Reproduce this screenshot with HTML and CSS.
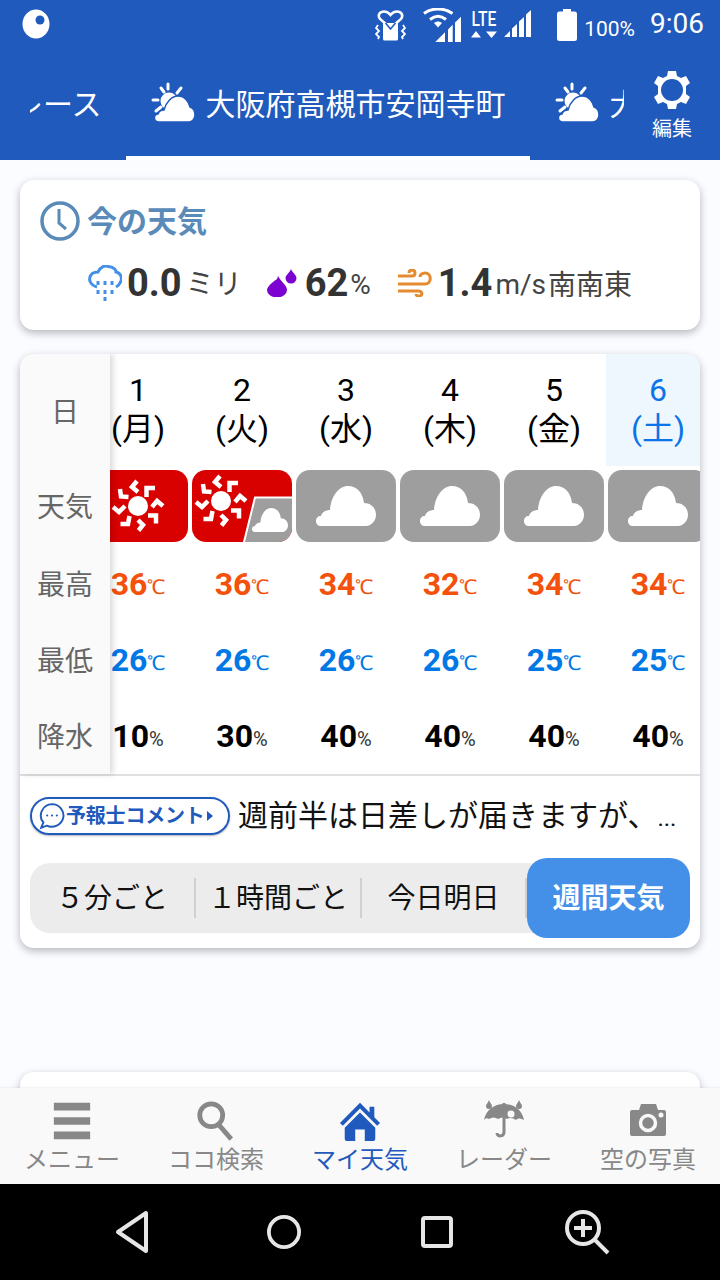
FILE: index.html
```html
<!DOCTYPE html>
<html lang="ja">
<head>
<meta charset="utf-8">
<title>天気</title>
<link rel="stylesheet" href="styles.css">
</head>
<body>
<svg class="defs" width="0" height="0">
  <symbol id="partly" viewBox="0 0 44 40">
    <g stroke="#fff" stroke-width="3" stroke-linecap="round"><path d="M17 2v5M10 6l3 4M30 6l-4 5M2 18h5M5 29l5-4"/></g>
    <circle cx="18" cy="19" r="8.500" fill="#fff"/>
    <path d="M8 40a4 4 0 0 1-1-8c1-3 4-4 6-4 2-8 8-14 14-14 7 0 11 6 12 11 3 1 5 4 5 8 0 4-3 7-6 7z" fill="#fff" stroke="#1f5abc" stroke-width="1.500"/>
  </symbol>
  <symbol id="cloud" viewBox="0 0 60 40">
    <path d="M5 40C2 40 0 38 0 35C0 32 2 30 5 30C6 26 10 24 14 24C15 10 23 0 32 0C41 0 47 7 48 17C55 17 60 22 60 29C60 35 55 40 50 40Z" fill="#fff"/>
  </symbol>
  <symbol id="sun" viewBox="-30 -30 60 60">
    <circle r="10" fill="#fff"/>
    <g fill="none" stroke="#fff" stroke-width="4.500">
      <path d="M-1-25l-5 6 6 5"/>
      <path d="M17-18H8.500v9"/>
      <path d="M14 1l5-6 6 5"/>
      <path d="M10 9.500h8v8"/>
      <path d="M0 14l5 5-4.500 5.500"/>
      <path d="M-8.500 10l-1.500 8h-7.500"/>
      <path d="M-25 1l6 5 6-6"/>
      <path d="M-18-17l1 7.500 7.500.5"/>
    </g>
  </symbol>
</svg>
<div class="phone">
  <div class="top">
    <div class="status">
      <svg class="st-dot" viewBox="0 0 28 30"><ellipse cx="14" cy="15" rx="13.500" ry="14.500" fill="#fff"/><circle cx="18" cy="11" r="4.500" fill="#1f5abc"/></svg>
      <div class="st-right">
        <svg class="st-ic st-vib" viewBox="0 0 31 31">
          <path d="M15.500 18 5 9C2 5 5 1.500 9 1.500c3 0 5 1.500 6.500 3.500C17 3 19 1.500 22 1.500c4 0 7 3.500 4 7.500z" fill="none" stroke="#fff" stroke-width="2.500"/>
          <path d="M8 13h15v16a1.500 1.500 0 0 1-1.500 1.500h-12A1.500 1.500 0 0 1 8 29z" fill="#fff"/>
          <path d="M10.500 13l5 6 5-6" fill="none" stroke="#1f5abc" stroke-width="1.500"/>
          <path d="M3 15L1 18l3 3-3 3 3 3-1 2M28 15l2 3-3 3 3 3-3 3 1 2" fill="none" stroke="#fff" stroke-width="1.800"/>
        </svg>
        <svg class="st-ic st-wifi" viewBox="0 0 39 34">
          <g fill="none" stroke="#fff" stroke-width="3"><path d="M1 5.500c8-6 20-6 28.500 0"/><path d="M7 11.500c5-4 11-4 16 0"/></g>
          <path d="M11 15c3-2 5-2 8 0l-4 4.500z" fill="#fff"/>
          <path d="M38 8.700V34h-6V14.500zM29.700 16.800V34H25V21.400zM22 24.300V34H12.300z" fill="#fff"/>
        </svg>
        <div class="st-lte"><span class="st-lte-t">LTE</span><svg class="st-arrows" viewBox="0 0 27 7"><path d="M5 0l5 6.500H0zM15 .5h11l-5.500 6.500z" fill="#fff"/></svg></div>
        <svg class="st-ic st-sig" viewBox="0 0 28 27"><path d="M28 0v27h-5V4.500zM21 7v20h-5V11.500zM14 14v13H9V18.500zM7 21v6H1z" fill="#fff"/></svg>
        <svg class="st-ic st-bat" viewBox="0 0 20 32"><path d="M6 0h8v2.500h3.500A2.500 2.500 0 0 1 20 5v24.500a2.500 2.500 0 0 1-2.500 2.500h-15A2.500 2.500 0 0 1 0 29.500V5a2.500 2.500 0 0 1 2.500-2.500H6z" fill="#fff"/></svg>
        <span class="st-pct">100%</span>
        <span class="st-time">9:06</span>
      </div>
    </div>
    <div class="tabbar">
      <div class="tabs">
        <div class="tab tab-first"><svg class="tab-ic"><use href="#partly"/></svg><span>レース</span></div>
        <div class="tab tab-active"><svg class="tab-ic"><use href="#partly"/></svg><span>大阪府高槻市安岡寺町</span></div>
        <div class="tab"><svg class="tab-ic"><use href="#partly"/></svg><span>大</span></div>
      </div>
      <div class="edit">
        <svg class="gear" viewBox="0 0 40 40"><path d="M16 1h8l1 5 4 2 5-2 4 7-4 3v8l4 3-4 7-5-2-4 2-1 5h-8l-1-5-4-2-5 2-4-7 4-3v-8l-4-3 4-7 5 2 4-2z" fill="#fff"/><circle cx="20" cy="20" r="11" fill="#1f5abc"/></svg>
        <span class="edit-label">編集</span>
      </div>
    </div>
  </div>

  <main class="content">
    <section class="card now">
      <h2 class="now-title">
        <svg class="clock" viewBox="0 0 40 40"><circle cx="20" cy="20" r="18" fill="none" stroke="#5a8ab8" stroke-width="3.500"/><path d="M19 8v14l7 6" fill="none" stroke="#5a8ab8" stroke-width="3"/></svg>
        <span class="now-title-t">今の天気</span>
      </h2>
      <div class="now-row">
        <svg class="now-ic" viewBox="0 0 34 36">
          <path d="M9 22C2 20 0 14 3 10C5 7 8 7 10 7C12 2 17 0 20 1.500C26 2 28 5 28 7C33 8 34 13 33 16C32 19 30 21 28 22" fill="none" stroke="#4490e8" stroke-width="3"/>
          <path d="M10 16v4M17 16v4M24 16v4M10 25v4M17 25v4M24 25v4M17 32v4" stroke="#4490e8" stroke-width="3"/>
        </svg>
        <b class="num">0.0</b><span class="unit unit-mm">ミリ</span>
        <svg class="now-ic ic-drop" viewBox="0 0 30 28"><path d="M11 7c-1 4-1 3-5 6-4 3-6 6-6 8a10 7.500 0 0 0 20 0c0-5-6-8-9-14z" fill="#7b02d0"/><path d="M24 0c1 3 5.500 6 5.500 9a5.500 5.500 0 0 1-11 0c0-3 4-5 5.500-9z" fill="#7b02d0"/></svg>
        <b class="num">62</b><span class="unit unit-pct">%</span>
        <svg class="now-ic ic-wind" viewBox="0 0 34 28">
          <g fill="none" stroke="#e58a2e" stroke-width="3">
            <path d="M0 7h14c4 0 4-6 0-6-2 0-3 1-3 3"/>
            <path d="M0 15h27c7 0 7-11 0-11-3 0-5 2-5 4"/>
            <path d="M0 22h20c5 0 5 5 1 5-2 0-3-1-3-2"/>
          </g>
        </svg>
        <b class="num">1.4</b><span class="unit unit-ms">m/s</span><span class="unit-dir">南南東</span>
      </div>
    </section>

    <section class="card week">
      <div class="table">
        <div class="labels">
          <div class="lab lab-date">日</div>
          <div class="lab lab-wx">天気</div>
          <div class="lab lab-row">最高</div>
          <div class="lab lab-row">最低</div>
          <div class="lab lab-row">降水</div>
        </div>
        <div class="days">
          <div class="day">
            <div class="date">1<br>(月)</div>
            <div class="wx wx-sun"><svg class="ic-sun"><use href="#sun"/></svg></div>
            <div class="val hi">36<small>℃</small></div><div class="val lo">26<small>℃</small></div><div class="val rain">10<small>%</small></div>
          </div>
          <div class="day">
            <div class="date">2<br>(火)</div>
            <div class="wx wx-sun wx-mix"><svg class="ic-sun"><use href="#sun"/></svg>
              <svg class="mix" viewBox="0 0 100 72"><path d="M51.500 74 63 27.500H102V74z" fill="#9e9e9e" stroke="#fff" stroke-width="2"/><use href="#cloud" x="60" y="36" width="36" height="28"/></svg></div>
            <div class="val hi">36<small>℃</small></div><div class="val lo">26<small>℃</small></div><div class="val rain">30<small>%</small></div>
          </div>
          <div class="day">
            <div class="date">3<br>(水)</div>
            <div class="wx"><svg class="ic-cloud"><use href="#cloud"/></svg></div>
            <div class="val hi">34<small>℃</small></div><div class="val lo">26<small>℃</small></div><div class="val rain">40<small>%</small></div>
          </div>
          <div class="day">
            <div class="date">4<br>(木)</div>
            <div class="wx"><svg class="ic-cloud"><use href="#cloud"/></svg></div>
            <div class="val hi">32<small>℃</small></div><div class="val lo">26<small>℃</small></div><div class="val rain">40<small>%</small></div>
          </div>
          <div class="day">
            <div class="date">5<br>(金)</div>
            <div class="wx"><svg class="ic-cloud"><use href="#cloud"/></svg></div>
            <div class="val hi">34<small>℃</small></div><div class="val lo">25<small>℃</small></div><div class="val rain">40<small>%</small></div>
          </div>
          <div class="day day-sat">
            <div class="date">6<br>(土)</div>
            <div class="wx"><svg class="ic-cloud"><use href="#cloud"/></svg></div>
            <div class="val hi">34<small>℃</small></div><div class="val lo">25<small>℃</small></div><div class="val rain">40<small>%</small></div>
          </div>
        </div>
      </div>
      <div class="comment">
        <div class="badge">
          <svg class="bubble" viewBox="0 0 26 26"><path d="M13 2a11 10.500 0 1 1-5 20l-5 2 2-5A11 10.500 0 0 1 13 2z" fill="none" stroke="#1f5abc" stroke-width="1.800"/><g fill="#1f5abc"><circle cx="8.500" cy="12.500" r="1"/><circle cx="13" cy="12.500" r="1"/><circle cx="17.500" cy="12.500" r="1"/></g></svg>
          <span class="badge-t">予報士コメント</span><span class="badge-arrow"></span>
        </div>
        <p class="comment-t">週前半は日差しが届きますが、<span class="dots">...</span></p>
      </div>
      <div class="seg">
        <div class="seg-i seg-a"><span class="seg-t">５分ごと</span></div>
        <div class="seg-i seg-b"><span class="seg-t">１時間ごと</span></div>
        <div class="seg-i seg-c"><span class="seg-t">今日明日</span></div>
        <div class="seg-on"><span class="seg-t">週間天気</span></div>
      </div>
    </section>

    <section class="card peek"></section>
  </main>

  <nav class="nav">
    <div class="nav-i">
      <svg class="nav-ic" viewBox="0 0 44 44"><path d="M3 3h38v8H3zM3 18h38v8H3zM3 33h38v8H3z" fill="#888"/></svg>
      <span>メニュー</span>
    </div>
    <div class="nav-i">
      <svg class="nav-ic" viewBox="0 0 44 44"><circle cx="17" cy="16" r="12" fill="none" stroke="#888" stroke-width="5"/><path d="M25 26l13 15" stroke="#888" stroke-width="5"/></svg>
      <span>ココ検索</span>
    </div>
    <div class="nav-i nav-on">
      <svg class="nav-ic" viewBox="0 0 44 44"><path d="M22 3 1 24l3 3L22 9l18 18 3-3-6-6V7h-5v6z" fill="#1f5abc"/><path d="M22 13 6 29v11a3 3 0 0 0 3 3h8V31h10v12h8a3 3 0 0 0 3-3V29z" fill="#1f5abc"/></svg>
      <span>マイ天気</span>
    </div>
    <div class="nav-i">
      <svg class="nav-ic" viewBox="0 0 42 42">
        <path d="M1 20C3 10 11 4 21 4s18 6 20 16c-3-2-6-2-8 0-3-2-6-3-9-1-3-2-6-2-9 0-3-2-6-2-9 0-2-1-3-1-5 1z" fill="#888"/>
        <path d="M21 3v29c0 5-7 5-7 1" fill="none" stroke="#888" stroke-width="3"/>
        <path d="M6 0c1 3 3 4 3 6a3 3 0 0 1-6 0c0-2 2-3 3-6zM36 0c1 3 3 4 3 6a3 3 0 0 1-6 0c0-2 2-3 3-6z" fill="#888"/>
        <circle cx="28" cy="14" r="3.500" fill="#f9f9f9"/>
      </svg>
      <span>レーダー</span>
    </div>
    <div class="nav-i">
      <svg class="nav-ic" viewBox="0 0 42 42"><path d="M5 10h7l2-6h15l2 6h6a2 2 0 0 1 2 2v22a2 2 0 0 1-2 2H5a2 2 0 0 1-2-2V12a2 2 0 0 1 2-2z" fill="#888"/><circle cx="21" cy="23" r="7.500" fill="none" stroke="#f9f9f9" stroke-width="3.500"/><circle cx="34" cy="15" r="2.500" fill="#f9f9f9"/></svg>
      <span>空の写真</span>
    </div>
  </nav>

  <div class="sysnav">
    <svg class="sys sys-back" viewBox="0 0 34 44"><path d="M31 3v38L3 22z" fill="none" stroke="#e6e6e6" stroke-width="4" stroke-linejoin="round"/></svg>
    <svg class="sys sys-home" viewBox="0 0 36 36"><circle cx="18" cy="18" r="16" fill="none" stroke="#e6e6e6" stroke-width="4"/></svg>
    <svg class="sys sys-rec" viewBox="0 0 36 36"><rect x="4" y="4" width="28" height="28" rx="2" fill="none" stroke="#e6e6e6" stroke-width="4"/></svg>
    <svg class="sys sys-zoom" viewBox="0 0 46 46"><circle cx="19" cy="19" r="16" fill="none" stroke="#e6e6e6" stroke-width="4"/><path d="M19 10v18M10 19h18M31 31l13 13" fill="none" stroke="#e6e6e6" stroke-width="4"/></svg>
  </div>
</div>
</body>
</html>
```
FILE: styles.css
```css
* { box-sizing: border-box; }
html, body { margin: 0; padding: 0; }
body { font-family: "Noto Sans CJK JP", "Noto Sans", Roboto, sans-serif; background: #fbfcff; }
.defs { position: absolute; }
.phone { width: 720px; height: 1280px; display: flex; flex-direction: column; overflow: hidden; }

.top { background: #1f5abc; color: #fff; flex: none; }
.status { height: 48px; display: flex; align-items: center; justify-content: space-between; padding: 0 16px 0 22px; }
.st-dot { width: 28px; height: 30px; }
.st-right { display: flex; align-items: center; }
.st-ic { display: block; }
.st-vib { width: 31px; height: 31px; margin-top: 2px; }
.st-wifi { width: 39px; height: 34px; margin-left: 17px; margin-top: 2px; }
.st-lte { display: flex; flex-direction: column; align-items: center; margin-left: 8px; width: 28px; margin-top: -1px; }
.st-lte-t { font: 500 20px/20px Roboto, sans-serif; transform: scaleX(.78); }
.st-arrows { width: 27px; height: 7px; display: block; margin-top: 2px; }
.st-sig { width: 28px; height: 27px; margin-left: 5px; margin-top: -2px; }
.st-bat { width: 20px; height: 32px; margin-left: 26px; margin-top: 2px; }
.st-pct { font: 400 21px/24px Roboto, sans-serif; margin-left: 7px; margin-top: 10px; }
.st-time { font: 400 28px/32px Roboto, sans-serif; margin-left: 15px; }

.tabbar { height: 112px; display: flex; }
.tabs { width: 594px; margin-left: 30px; display: flex; overflow: hidden; }
.tab { flex: none; height: 112px; padding: 0 24px 0 25px; display: flex; align-items: center; gap: 11px; font-size: 30px; border-bottom: 4px solid transparent; white-space: nowrap; }
.tab-first { margin-left: -97px; }
.tab-active { border-bottom-color: #fff; }
.tab-ic { width: 44px; height: 40px; flex: none; }
.edit { width: 96px; display: flex; flex-direction: column; align-items: center; padding-top: 22px; }
.gear { width: 40px; height: 40px; }
.edit-label { font-size: 20px; line-height: 28px; margin-top: 4px; }

.content { flex: 1; min-height: 0; padding: 20px 20px 0; overflow: hidden; display: flex; flex-direction: column; }
.card { background: #fff; border-radius: 14px; box-shadow: 0 3px 8px rgba(0,0,0,.28); flex: none; }

.now { height: 150px; margin-bottom: 24px; padding: 20px; }
.now-title { margin: 0; height: 42px; display: flex; align-items: center; gap: 7px; color: #5a8ab8; font-size: 30px; font-weight: 700; }
.now-title-t { line-height: 38px; margin-bottom: 4px; }
.clock { width: 40px; height: 40px; flex: none; }
.now-row { display: flex; align-items: center; height: 44px; margin-top: 19px; padding-left: 48px; color: #333; }
.now-ic { width: 34px; height: 36px; flex: none; margin-right: 5px; }
.ic-drop { width: 30px; height: 28px; margin-right: 8px; margin-left: 25px; }
.ic-wind { width: 34px; height: 28px; margin-left: 27px; margin-right: 6px; }
.num { font: 700 38px/44px Roboto, sans-serif; }
.unit { font-size: 28px; line-height: 40px; margin-left: 4px; margin-top: 4px; color: #444; font-family: Roboto, "Noto Sans CJK JP", sans-serif; }
.unit-pct { font-size: 28px; margin-left: 2px; }
.unit-ms { font-size: 28px; margin-left: 3px; }
.unit-dir { font-size: 28px; line-height: 44px; margin-left: 2px; color: #444; }

.week { height: 594px; overflow: hidden; }
.table { display: flex; height: 422px; border-bottom: 2px solid #e0e0e0; }
.labels { width: 90px; flex: none; background: #fafafa; box-shadow: 3px 0 6px rgba(0,0,0,.15); position: relative; z-index: 1; color: #666; font-size: 28px; text-align: center; }
.lab { display: flex; align-items: center; justify-content: center; }
.lab-date { height: 112px; }
.lab-wx { height: 78px; }
.lab-row { height: 76px; }
.labels .lab-row:nth-child(3) { height: 77px; }
.days { flex: 1; min-width: 0; display: flex; overflow: hidden; }
.day { flex: none; width: 104px; text-align: center; }
.day:first-child { margin-left: -24px; }
.date { height: 112px; padding-top: 17px; font: 400 32px/39px Roboto, "Noto Sans CJK JP", sans-serif; color: #000; }
.day-sat .date { background: #eef7fd; color: #0a74e8; }
.wx { margin: 4px 2px 0; height: 72px; background: #9e9e9e; border-radius: 14px; position: relative; overflow: hidden; }
.wx-sun { background: #d90000; }
.ic-sun { width: 60px; height: 60px; display: block; margin: 6px 0 0 20px; }
.wx-mix .ic-sun { margin: 1px 0 0 -1px; }
.mix { position: absolute; left: 0; top: 0; width: 100px; height: 72px; }
.ic-cloud { width: 60px; height: 40px; display: block; margin: 16px 0 0 20px; }
.val { height: 76px; display: flex; align-items: center; justify-content: center; font: 700 32px/1 Roboto, sans-serif; }
.val:nth-child(3) { margin-top: 4px; height: 76px; }
.val small { font-size: 20px; font-weight: 400; margin-top: 5px; }
.hi { color: #f4510b; }
.lo { color: #0078e6; }
.rain { color: #000; font-size: 32px; }
.rain small { font-size: 20px; color: #333; }

.comment { display: flex; align-items: center; height: 79px; padding: 0 10px; }
.badge { width: 200px; height: 38px; flex: none; border: 2px solid #1f5abc; border-radius: 19px; display: flex; align-items: center; padding-left: 6px; box-shadow: 0 1px 2px rgba(0,0,0,.3); color: #1f5abc; }
.bubble { width: 28px; height: 28px; flex: none; }
.badge-t { font-size: 20px; font-weight: 700; line-height: 1; margin-left: 0; margin-bottom: 2px; letter-spacing: -.2px; white-space: nowrap; }
.badge-arrow { width: 0; height: 0; border-left: 6px solid #1f5abc; border-top: 5px solid transparent; border-bottom: 5px solid transparent; margin-left: 2px; }
.comment-t { margin: 0 0 6px 8px; font-size: 30px; line-height: 40px; color: #111; white-space: nowrap; }
.dots { font: 400 24px/1 Roboto, sans-serif; margin-left: 0; }

.seg { margin: 8px 10px 0; height: 70px; border-radius: 20px; background: #ececec; display: flex; align-items: center; position: relative; font-size: 28px; color: #111; }
.seg-t { margin-bottom: 4px; white-space: nowrap; }
.seg-i { height: 40px; display: flex; align-items: center; justify-content: center; border-right: 2px solid #d0d0d4; flex: none; }
.seg-a { width: 166px; }
.seg-b { width: 166px; }
.seg-c { width: 165px; }
.seg-on { position: absolute; right: 0; top: -5px; width: 163px; height: 80px; background: #4490e8; color: #fff; border-radius: 20px; font-weight: 700; display: flex; align-items: center; justify-content: center; }

.peek { height: 60px; margin-top: 124px; }

.nav { height: 96px; flex: none; background: #f9f9f9; display: flex; position: relative; box-shadow: 0 -1px 2px rgba(0,0,0,.06); }
.nav-i { flex: 1; display: flex; flex-direction: column; align-items: center; padding-top: 12px; color: #888; font-size: 24px; line-height: 32px; }
.nav-ic { width: 42px; height: 42px; }
.nav-on { color: #1f5abc; }

.sysnav { height: 96px; flex: none; background: #000; display: flex; align-items: center; padding-left: 115px; }
.sys { flex: none; }
.sys-back { width: 34px; height: 44px; }
.sys-home { width: 34px; height: 34px; margin-left: 118px; }
.sys-rec { width: 36px; height: 36px; margin-left: 118px; }
.sys-zoom { width: 46px; height: 46px; margin-left: 109px; }
```
